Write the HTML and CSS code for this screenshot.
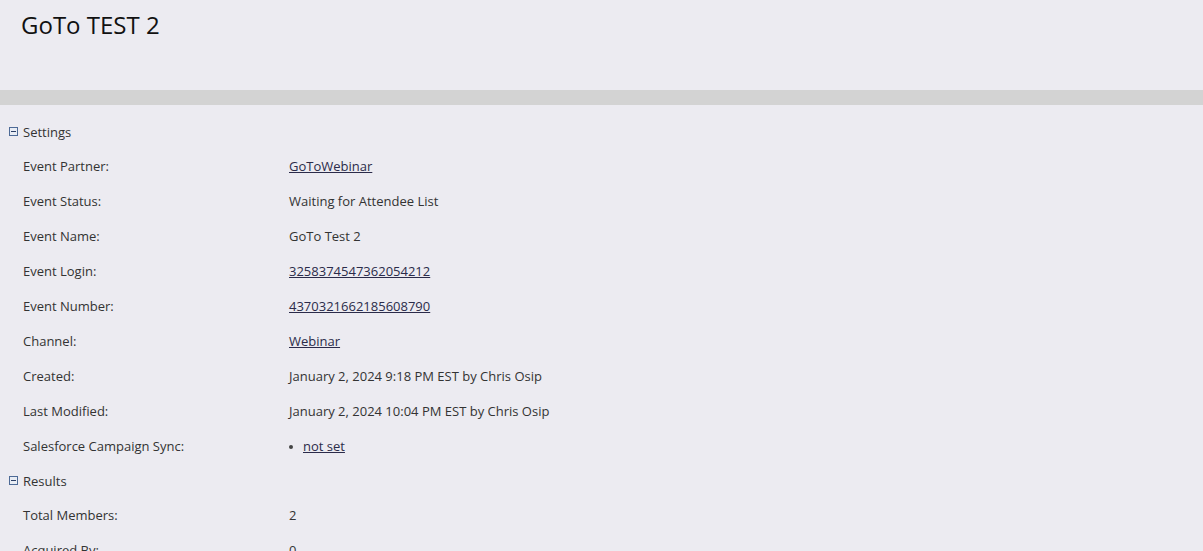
FILE: index.html
```html
<!DOCTYPE html>
<html>
<head>
<meta charset="utf-8">
<link rel="stylesheet" href="styles.css">
</head>
<body>
<header class="page-header">
  <h1 class="title">GoTo TEST 2</h1>
</header>
<div class="divider"></div>
<section class="section">
  <div class="section-head"><span class="toggle"></span>Settings</div>
  <div class="row"><div class="label">Event Partner:</div><div class="value"><a href="#">GoToWebinar</a></div></div>
  <div class="row"><div class="label">Event Status:</div><div class="value">Waiting for Attendee List</div></div>
  <div class="row"><div class="label">Event Name:</div><div class="value">GoTo Test 2</div></div>
  <div class="row"><div class="label">Event Login:</div><div class="value"><a href="#">3258374547362054212</a></div></div>
  <div class="row"><div class="label">Event Number:</div><div class="value"><a href="#">4370321662185608790</a></div></div>
  <div class="row"><div class="label">Channel:</div><div class="value"><a href="#">Webinar</a></div></div>
  <div class="row"><div class="label">Created:</div><div class="value">January 2, 2024 9:18 PM EST by Chris Osip</div></div>
  <div class="row"><div class="label">Last Modified:</div><div class="value">January 2, 2024 10:04 PM EST by Chris Osip</div></div>
  <div class="row"><div class="label">Salesforce Campaign Sync:</div><div class="value"><ul class="bullets"><li><a href="#">not set</a></li></ul></div></div>
</section>
<section class="section">
  <div class="section-head"><span class="toggle"></span>Results</div>
  <div class="row"><div class="label">Total Members:</div><div class="value">2</div></div>
  <div class="row"><div class="label">Acquired By:</div><div class="value">0</div></div>
</section>
</body>
</html>
```
FILE: styles.css
```css
html, body {
  margin: 0;
  padding: 0;
  background: #ecebf1;
  font-family: "Open Sans", "Liberation Sans", sans-serif;
  color: #333333;
  overflow: hidden;
}
.page-header {
  height: 90px;
  padding: 0 0 0 21px;
  box-sizing: border-box;
}
.title {
  margin: 0;
  padding-top: 9px;
  font-size: 24px;
  font-weight: 400;
  color: #111111;
  line-height: 32px;
}
.divider {
  height: 15px;
  background: #d3d3d3;
}
.section {
  display: flex;
  flex-direction: column;
}
.section-head {
  display: flex;
  align-items: center;
  height: 35px;
  padding-left: 9px;
  font-size: 13px;
  color: #333;
  margin-top: 9px;
  margin-bottom: -1px;
}
.section + .section .section-head {
  margin-top: 0;
}
.toggle {
  width: 7px;
  height: 7px;
  border: 1px solid #4d6a96;
  background: #e8ecf4;
  margin-right: 5px;
  position: relative;
  box-sizing: content-box;
}
.toggle::after {
  content: "";
  position: absolute;
  left: 1px;
  right: 1px;
  top: 3px;
  height: 1px;
  background: #2b3f66;
}
.row {
  display: flex;
  align-items: center;
  height: 35px;
  font-size: 13px;
}
.label {
  width: 266px;
  padding-left: 23px;
  color: #333;
}
.value {
  color: #333;
}
.value a {
  color: #2b2b4a;
  text-decoration: underline;
}
.bullets {
  margin: 0;
  padding: 0 0 0 14px;
  list-style: none;
  position: relative;
}
.bullets li::before {
  content: "";
  position: absolute;
  left: 0;
  top: 8px;
  width: 4px;
  height: 4px;
  border-radius: 50%;
  background: #444;
}
```
